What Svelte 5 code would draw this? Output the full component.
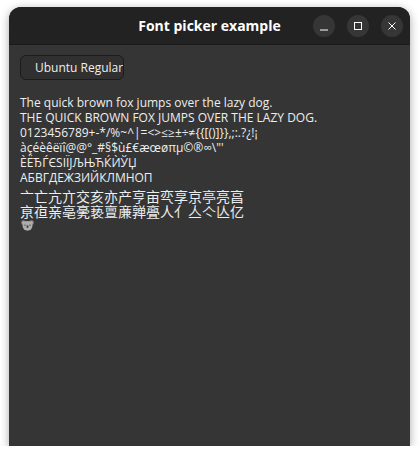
<script>
  const latin = [
    'The quick brown fox jumps over the lazy dog.',
    'THE QUICK BROWN FOX JUMPS OVER THE LAZY DOG.',
    '0123456789+-*/%~^|=<>≤≥±÷≠{{[()]}},;:.?¿!¡',
    'àçéèêëïî@@°_#§$ù£€æœøπµ©®∞\\"\'',
    'ÈЁЂЃЄЅІЇЈЉЊЋЌЍЎЏ',
    'АБВГДЕЖЗИЙКЛМНОП'
  ];
  const cjk = ['亠亡亢亣交亥亦产亨亩亪享京亭亮亯', '亰亱亲亳亴亵亶亷亸亹人亻亼亽亾亿'];
</script>

<div class="window">
  <header class="titlebar">
    <span class="title">Font picker example</span>
    <div class="controls">
      <button class="ctl" aria-label="Minimize">
        <svg viewBox="0 0 22 22" width="22" height="22"><path d="M7 15h8" /></svg>
      </button>
      <button class="ctl" aria-label="Maximize">
        <svg viewBox="0 0 22 22" width="22" height="22"><rect x="7.5" y="7.5" width="7" height="7" /></svg>
      </button>
      <button class="ctl" aria-label="Close">
        <svg viewBox="0 0 22 22" width="22" height="22"><path d="M7.5 7.5l7 7M14.5 7.5l-7 7" /></svg>
      </button>
    </div>
  </header>

  <main class="content">
    <button class="picker">Ubuntu Regular</button>
    <div class="sample">
      {#each latin as line}
        <div class="line">{line}</div>
      {/each}
    </div>
    <div class="cjk">
      {#each cjk as line}
        <div>{line}</div>
      {/each}
    </div>
    <svg class="koala" viewBox="0 0 14 14" width="13" height="13" role="img" aria-label="koala">
      <circle cx="2.8" cy="5" r="2.6" fill="#8f8f8f" />
      <circle cx="11.2" cy="5" r="2.6" fill="#8f8f8f" />
      <circle cx="2.8" cy="5" r="1.3" fill="#c9b0b0" />
      <circle cx="11.2" cy="5" r="1.3" fill="#c9b0b0" />
      <ellipse cx="7" cy="8.4" rx="5.4" ry="5.2" fill="#adadad" />
      <ellipse cx="7" cy="9.4" rx="1.1" ry="1.5" fill="#444" />
      <circle cx="4.3" cy="7.6" r="0.7" fill="#333" />
      <circle cx="9.7" cy="7.6" r="0.7" fill="#333" />
    </svg>
  </main>
</div>

<style>
  :global(body) {
    margin: 0;
    background: #fff;
  }
  .window {
    width: 401px;
    height: 439px;
    margin: 7px 0 0 9px;
    display: flex;
    flex-direction: column;
    background: #353535;
    border-radius: 12px 12px 0 0;
    box-shadow: 0 2px 10px rgba(0, 0, 0, 0.35);
    overflow: hidden;
    font-family: "Open Sans", "Noto Sans CJK SC", sans-serif;
    color: #fff;
  }
  .titlebar {
    height: 37px;
    flex: none;
    display: flex;
    align-items: center;
    justify-content: flex-end;
    padding-right: 7px;
    position: relative;
    background: #222;
    border-bottom: 1px solid #1a1a1a;
  }
  .title {
    position: absolute;
    left: 0;
    right: 0;
    text-align: center;
    font-size: 14px;
    font-weight: 700;
  }
  .controls {
    display: flex;
    gap: 12px;
  }
  .ctl {
    width: 22px;
    height: 22px;
    padding: 0;
    border: 0;
    border-radius: 50%;
    background: #363636;
  }
  .ctl svg {
    display: block;
    fill: none;
    stroke: #fff;
    stroke-width: 1;
  }
  .content {
    flex: 1;
    padding: 10px 11px;
    display: flex;
    flex-direction: column;
    align-items: flex-start;
  }
  .picker {
    width: 104px;
    height: 25px;
    padding: 0 0 0 14px;
    box-sizing: border-box;
    text-align: left;
    white-space: nowrap;
    overflow: hidden;
    background: #303030;
    border: 1px solid #1c1c1c;
    border-radius: 6px;
    color: #eee;
    font: 12px "Open Sans", sans-serif;
  }
  .sample {
    margin-top: 15px;
    font-size: 12px;
    line-height: 15px;
    color: #eee;
    white-space: nowrap;
  }
  .cjk {
    margin-top: 4px;
    font-size: 14px;
    line-height: 15px;
    color: #eee;
    white-space: nowrap;
  }
  .koala {
    margin: -1px 0 0 1px;
  }
</style>
